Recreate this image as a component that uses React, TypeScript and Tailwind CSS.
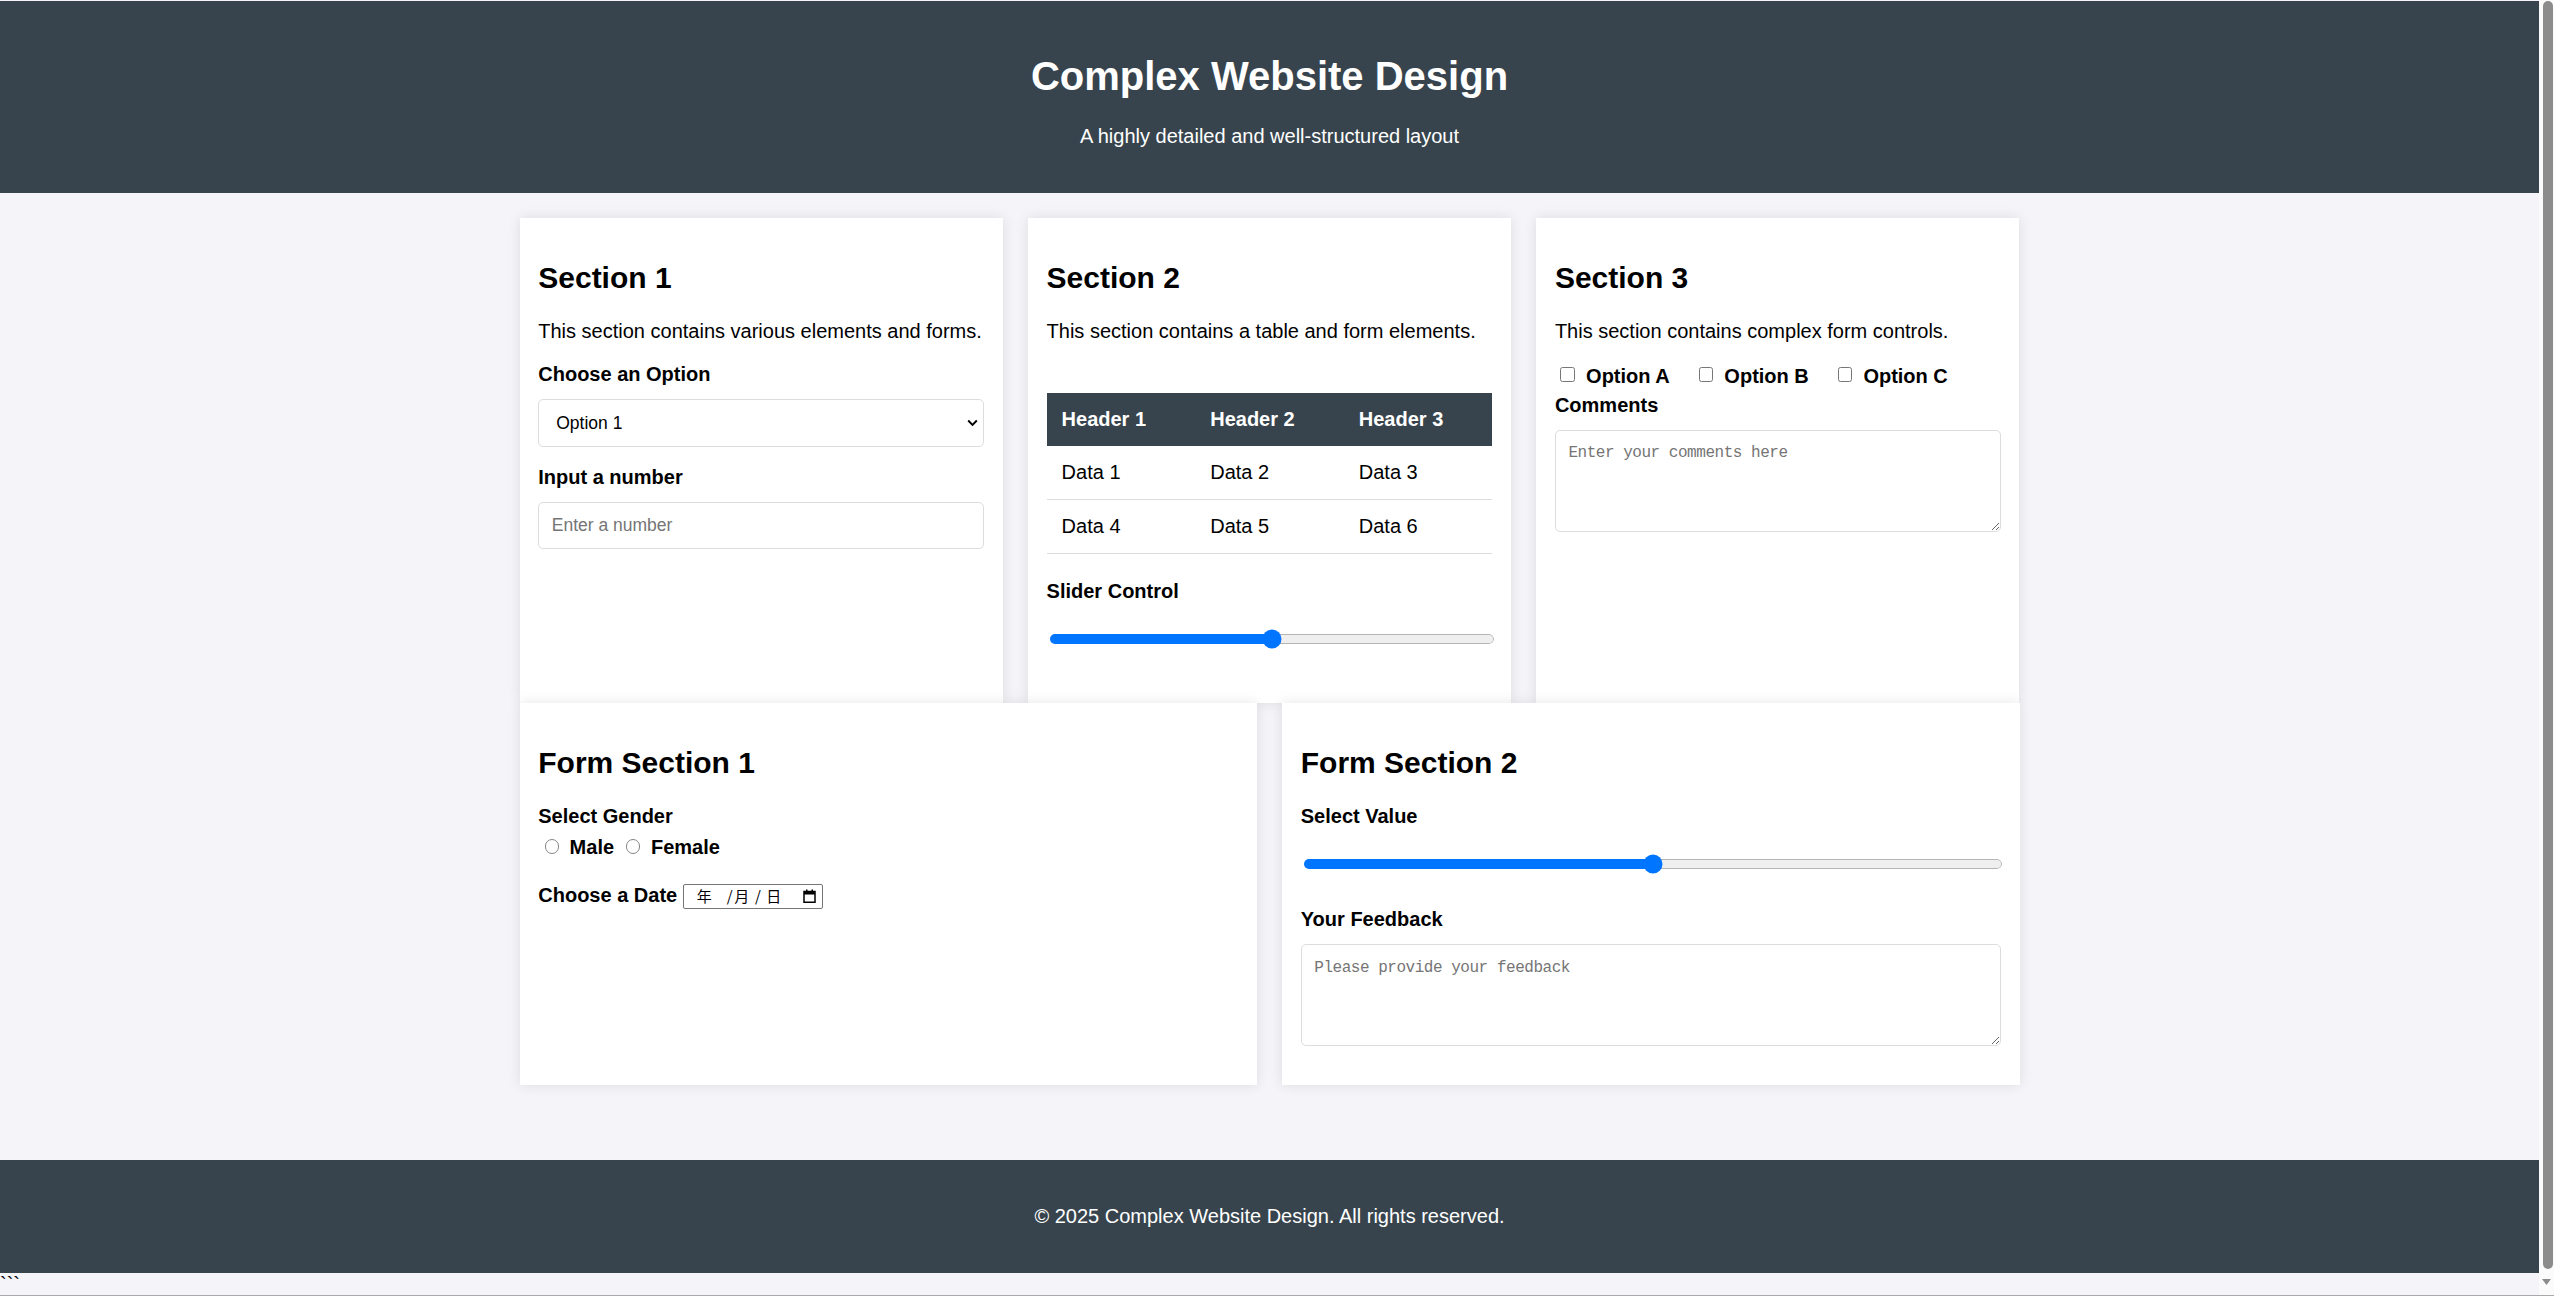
import React from "react";

const DARK = "bg-[#37444d]";

function Slider({ className }: { className: string }) {
  return (
    <div className={className}>
      <div className="relative flex h-[20px] items-center">
        <div className="flex h-[10px] w-full overflow-hidden rounded-full">
          <div className="w-1/2 bg-[#0075ff]" />
          <div className="flex-1 rounded-r-full border border-l-0 border-[#b5b5b5] bg-[#efefef]" />
        </div>
        <div className="absolute left-1/2 top-1/2 h-[19px] w-[19px] -translate-x-1/2 -translate-y-1/2 rounded-full bg-[#0075ff]" />
      </div>
    </div>
  );
}

function Card({ children }: { children: React.ReactNode }) {
  return (
    <div className="flex min-w-0 flex-1 basis-0 flex-col bg-white p-[18.75px] shadow-[0_0_12.5px_rgba(0,0,0,0.1)]">
      {children}
    </div>
  );
}

function Title({ children }: { children: React.ReactNode }) {
  return <h2 className="mb-[24.9px] mt-[24px] text-[30px] font-bold leading-[34.5px] text-black">{children}</h2>;
}

function Label({ children, className }: { children: React.ReactNode; className: string }) {
  return <label className={className}>{children}</label>;
}

export default function App() {
  return (
    <div className="flex h-[1296px] w-full flex-col overflow-hidden bg-[#f4f4f9] font-['Liberation_Sans',Arial,sans-serif] text-black">
      <div className="flex min-h-0 flex-1">
        <div className="flex min-w-0 flex-1 flex-col">
          <div className="h-[1px] shrink-0 bg-[#f4f4f9]" />
          <header className={`${DARK} shrink-0 py-[25px] text-center text-white`}>
            <h1 className="mb-[26px] mt-[26.8px] text-[40px] font-bold leading-[46px]">Complex Website Design</h1>
            <p className="mb-[20.2px] text-[20px] leading-[23px]">A highly detailed and well-structured layout</p>
          </header>

          <main className="mx-auto mt-[25px] flex w-[1500px] shrink-0 flex-col text-[20px] leading-[23px]">
            <div className="flex gap-[25px]">
              <Card>
                <Title>Section 1</Title>
                <p className="mb-[20px]">This section contains various elements and forms.</p>
                <Label className="mb-[13px] block font-bold">Choose an Option</Label>
                <div className="relative mb-[18.75px]">
                  <select className="block h-[48px] w-full appearance-none rounded-[5px] border border-[#dddddd] bg-white pl-[17px] text-[17.5px] text-black outline-none">
                    <option>Option 1</option>
                    <option>Option 2</option>
                    <option>Option 3</option>
                  </select>
                  <svg
                    className="pointer-events-none absolute right-[6px] top-1/2 -translate-y-1/2"
                    width="11"
                    height="8"
                    viewBox="0 0 11 8"
                  >
                    <path d="M1.2 1.5 L5.5 5.8 L9.8 1.5" fill="none" stroke="#000" strokeWidth="1.9" />
                  </svg>
                </div>
                <Label className="mb-[13px] block font-bold">Input a number</Label>
                <input
                  type="number"
                  placeholder="Enter a number"
                  className="block h-[47px] w-full rounded-[5px] border border-[#dddddd] bg-white px-[12.5px] text-[17.5px] outline-none placeholder:text-[#757575]"
                />
              </Card>

              <Card>
                <Title>Section 2</Title>
                <p className="mb-[20px]">This section contains a table and form elements.</p>
                <table className="mb-[26px] mt-[29.5px] w-full table-fixed border-collapse text-left">
                  <thead>
                    <tr className={`${DARK} text-white`}>
                      <th className="px-[15px] py-[15px] font-bold">Header 1</th>
                      <th className="px-[15px] py-[15px] font-bold">Header 2</th>
                      <th className="px-[15px] py-[15px] font-bold">Header 3</th>
                    </tr>
                  </thead>
                  <tbody>
                    <tr>
                      <td className="border-b border-[#dddddd] px-[15px] py-[15px]">Data 1</td>
                      <td className="border-b border-[#dddddd] px-[15px] py-[15px]">Data 2</td>
                      <td className="border-b border-[#dddddd] px-[15px] py-[15px]">Data 3</td>
                    </tr>
                    <tr>
                      <td className="border-b border-[#dddddd] px-[15px] py-[15px]">Data 4</td>
                      <td className="border-b border-[#dddddd] px-[15px] py-[15px]">Data 5</td>
                      <td className="border-b border-[#dddddd] px-[15px] py-[15px]">Data 6</td>
                    </tr>
                  </tbody>
                </table>
                <Label className="block font-bold">Slider Control</Label>
                <Slider className="mb-[35px] ml-[3px] mr-[-1.5px] mt-[26.4px]" />
              </Card>

              <Card>
                <Title>Section 3</Title>
                <p className="mb-[20px]">This section contains complex form controls.</p>
                <div className="flex h-[30.75px] items-start pt-[1.5px] font-bold">
                  {["Option A", "Option B", "Option C"].map((o) => (
                    <label key={o} className="mr-[23.4px] flex items-start">
                      <input
                        type="checkbox"
                        className="ml-[5.5px] mr-[11.2px] mt-[2.5px] h-[14.5px] w-[14.5px] appearance-none rounded-[2.5px] border border-[#767676] bg-white"
                      />
                      <span>{o}</span>
                    </label>
                  ))}
                </div>
                <Label className="mb-[13px] block font-bold">Comments</Label>
                <textarea
                  placeholder="Enter your comments here"
                  className="block h-[102px] w-full rounded-[5px] border border-[#dddddd] bg-white px-[12.5px] pb-[12.5px] pt-[13.5px] font-['Liberation_Mono',monospace] text-[16px] leading-[19px] tracking-[-0.47px] outline-none placeholder:text-[#757575]"
                />
              </Card>
            </div>

            <div className="flex gap-[25px]">
              <Card>
                <Title>Form Section 1</Title>
                <Label className="block font-bold">Select Gender</Label>
                <div className="mt-[7.75px] flex h-[23px] items-start font-bold">
                  <input
                    type="radio"
                    name="gender"
                    className="ml-[6.25px] mr-[10.6px] mt-[3.4px] h-[14.5px] w-[14.5px] appearance-none rounded-full border border-[#858585] bg-white"
                  />
                  <span className="mr-[5.55px]">Male</span>
                  <input
                    type="radio"
                    name="gender"
                    className="ml-[6.25px] mr-[10.6px] mt-[3.4px] h-[14.5px] w-[14.5px] appearance-none rounded-full border border-[#858585] bg-white"
                  />
                  <span>Female</span>
                </div>
                <div className="mt-[25.3px] flex items-start">
                  <span className="font-bold">Choose a Date</span>
                  <div className="ml-[5.6px] flex h-[25px] w-[140px] items-center rounded-[2px] border border-[#767676] bg-white font-['Noto_Sans_CJK_SC',sans-serif] text-[15px] leading-[18px]">
                    <span className="inline-block w-[43px] pl-[13px]">年</span>
                    <span className="inline-block w-[7.5px]">/</span>
                    <span className="inline-block w-[20.8px]">月</span>
                    <span className="inline-block w-[11.2px]">/</span>
                    <span className="inline-block">日</span>
                    <svg className="ml-auto mr-[6px]" width="13" height="14" viewBox="0 0 13 14">
                      <rect x="1" y="2.5" width="11" height="10.75" fill="none" stroke="#000" strokeWidth="1.5" />
                      <rect x="1" y="2" width="11" height="3.5" fill="#000" />
                      <rect x="3" y="0.5" width="1.5" height="2" fill="#000" />
                      <rect x="8.5" y="0.5" width="1.5" height="2" fill="#000" />
                    </svg>
                  </div>
                </div>
              </Card>

              <Card>
                <Title>Form Section 2</Title>
                <Label className="block font-bold">Select Value</Label>
                <Slider className="mb-[34px] ml-[3.25px] mr-[-0.75px] mt-[26.4px]" />
                <Label className="mb-[13px] block font-bold">Your Feedback</Label>
                <textarea
                  placeholder="Please provide your feedback"
                  className="mb-[20px] block h-[102px] w-full rounded-[5px] border border-[#dddddd] bg-white px-[12.5px] pb-[12.5px] pt-[13.5px] font-['Liberation_Mono',monospace] text-[16px] leading-[19px] tracking-[-0.47px] outline-none placeholder:text-[#757575]"
                />
              </Card>
            </div>
          </main>

          <footer className={`${DARK} mt-[75px] shrink-0 py-[25px] text-center text-white`}>
            <p className="my-[20px] text-[20px] leading-[23px]">© 2025 Complex Website Design. All rights reserved.</p>
          </footer>
          <div className="shrink-0 text-[20px] leading-[23px] text-black">```</div>
        </div>

        <div className="flex w-[15px] shrink-0 flex-col items-end bg-[#fbfbfb] pr-[1px] pt-[1px]">
          <div className="w-[10px] flex-1 rounded-full bg-[#8c8c8c]" />
          <div className="flex h-[26px] w-full items-center justify-center">
            <svg width="9" height="6" viewBox="0 0 9 6">
              <path d="M0 0h9L4.5 6z" fill="#8c8c8c" />
            </svg>
          </div>
        </div>
      </div>
      <div className="h-[1px] shrink-0 bg-[#a9a9a9]" />
    </div>
  );
}
